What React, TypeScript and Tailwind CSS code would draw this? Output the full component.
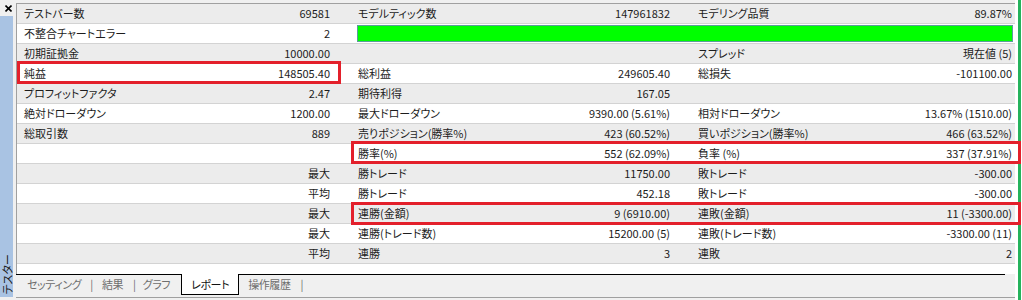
type Cell = { label?: string; value?: string };

type Row = {
  c1: Cell;
  c2?: Cell;
  c3?: Cell;
  bar?: boolean;
};

const rows: Row[] = [
  {
    c1: { label: 'テストバー数', value: '69581' },
    c2: { label: 'モデルティック数', value: '147961832' },
    c3: { label: 'モデリング品質', value: '89.87%' },
  },
  { c1: { label: '不整合チャートエラー', value: '2' }, bar: true },
  { c1: { label: '初期証拠金', value: '10000.00' }, c2: {}, c3: { label: 'スプレッド', value: '現在値 (5)' } },
  {
    c1: { label: '純益', value: '148505.40' },
    c2: { label: '総利益', value: '249605.40' },
    c3: { label: '総損失', value: '-101100.00' },
  },
  { c1: { label: 'プロフィットファクタ', value: '2.47' }, c2: { label: '期待利得', value: '167.05' }, c3: {} },
  {
    c1: { label: '絶対ドローダウン', value: '1200.00' },
    c2: { label: '最大ドローダウン', value: '9390.00 (5.61%)' },
    c3: { label: '相対ドローダウン', value: '13.67% (1510.00)' },
  },
  {
    c1: { label: '総取引数', value: '889' },
    c2: { label: '売りポジション(勝率%)', value: '423 (60.52%)' },
    c3: { label: '買いポジション(勝率%)', value: '466 (63.52%)' },
  },
  { c1: {}, c2: { label: '勝率(%)', value: '552 (62.09%)' }, c3: { label: '負率 (%)', value: '337 (37.91%)' } },
  { c1: { value: '最大' }, c2: { label: '勝トレード', value: '11750.00' }, c3: { label: '敗トレード', value: '-300.00' } },
  { c1: { value: '平均' }, c2: { label: '勝トレード', value: '452.18' }, c3: { label: '敗トレード', value: '-300.00' } },
  {
    c1: { value: '最大' },
    c2: { label: '連勝(金額)', value: '9 (6910.00)' },
    c3: { label: '連敗(金額)', value: '11 (-3300.00)' },
  },
  {
    c1: { value: '最大' },
    c2: { label: '連勝(トレード数)', value: '15200.00 (5)' },
    c3: { label: '連敗(トレード数)', value: '-3300.00 (11)' },
  },
  { c1: { value: '平均' }, c2: { label: '連勝', value: '3' }, c3: { label: '連敗', value: '2' } },
];

function CellView({ cell, className }: { cell?: Cell; className: string }) {
  return (
    <div className={`flex items-center justify-between ${className}`}>
      <span>{cell?.label}</span>
      <span>{cell?.value}</span>
    </div>
  );
}

function CloseIcon() {
  return (
    <svg className="h-[7px] w-[7px]" viewBox="0 0 7 7" aria-hidden="true">
      <line x1="0.5" y1="0.5" x2="6.5" y2="6.5" stroke="#000" strokeWidth="1.6" />
      <line x1="6.5" y1="0.5" x2="0.5" y2="6.5" stroke="#000" strokeWidth="1.6" />
    </svg>
  );
}

export default function App() {
  return (
    <div className="flex h-[300px] w-[1022px] overflow-hidden bg-[#f0f0f0] font-['Noto_Sans_CJK_JP',sans-serif] text-[11px] text-[#1c1c1c] [font-feature-settings:'palt']">
      {/* side tab strip */}
      <div className="flex w-[16px] flex-col">
        <div className="flex h-[16px] items-start pl-[5px] pt-[5px]">
          <CloseIcon />
        </div>
        <div className="mb-[3px] flex w-[13px] flex-1 items-end justify-center bg-[#a9c3e3] pb-[3px]">
          <span className="rotate-180 leading-[12px] text-[#1a1a1a] [text-orientation:sideways] [writing-mode:vertical-rl]">
            テスター
          </span>
        </div>
      </div>

      {/* report */}
      <div className="flex w-[999px] flex-col pt-[3px]">
        <div className="relative border-t border-l border-[#a0a0a0]">
          {rows.map((row, i) => (
            <div
              key={i}
              className={`flex h-[20px] border-b border-[#d3d3d3] leading-[19px] ${i % 2 === 0 ? 'bg-[#ececec]' : 'bg-white'}`}
            >
              <CellView cell={row.c1} className="w-[323px] pl-[7px] pr-[10px]" />
              {row.bar ? (
                <div className="flex flex-1 items-center pl-[17px] pr-[2px]">
                  <div className="h-[17px] w-full border border-[#5a9e9a] bg-[#00ff00]" />
                </div>
              ) : (
                <>
                  <CellView cell={row.c2} className="w-[340px] pl-[18px] pr-[10px]" />
                  <CellView cell={row.c3} className="flex-1 pl-[18px] pr-[3px]" />
                </>
              )}
            </div>
          ))}

          {/* highlight boxes */}
          <div className="pointer-events-none absolute top-[57px] left-[0px] h-[23px] w-[324px] border-[3px] border-[#e3202b]" />
          <div className="pointer-events-none absolute top-[137px] left-[334px] h-[23px] w-[670px] border-[3px] border-[#e3202b]" />
          <div className="pointer-events-none absolute top-[198px] left-[334px] h-[23px] w-[670px] border-[3px] border-[#e3202b]" />
        </div>

        <div className="h-[10px] border-l border-[#a0a0a0] bg-white" />

        {/* tabs */}
        <div className="h-[24px] border-b border-[#a0a0a0] bg-[#f0f0f0]">
          <div className="mr-[10px] flex h-[20px] items-center border-t border-black pl-[11px] tracking-[-0.4px] text-[#6e6e6e]">
            <span>セッティング</span>
            <span className="ml-[9px]">|</span>
            <span className="ml-[9px]">結果</span>
            <span className="ml-[10px]">|</span>
            <span className="ml-[7px]">グラフ</span>
            <div className="-mt-[1px] ml-[11px] flex h-[21px] items-center self-start border-x border-b border-black bg-white px-[9px] text-[#111]">
              レポート
            </div>
            <span className="ml-[9px]">操作履歴</span>
            <span className="ml-[10px]">|</span>
          </div>
        </div>
      </div>

      {/* window edge */}
      <div className="w-[3px] bg-white" />
      <div className="w-[3px] bg-[#25b35c]" />
      <div className="w-[1px] bg-white" />
    </div>
  );
}
